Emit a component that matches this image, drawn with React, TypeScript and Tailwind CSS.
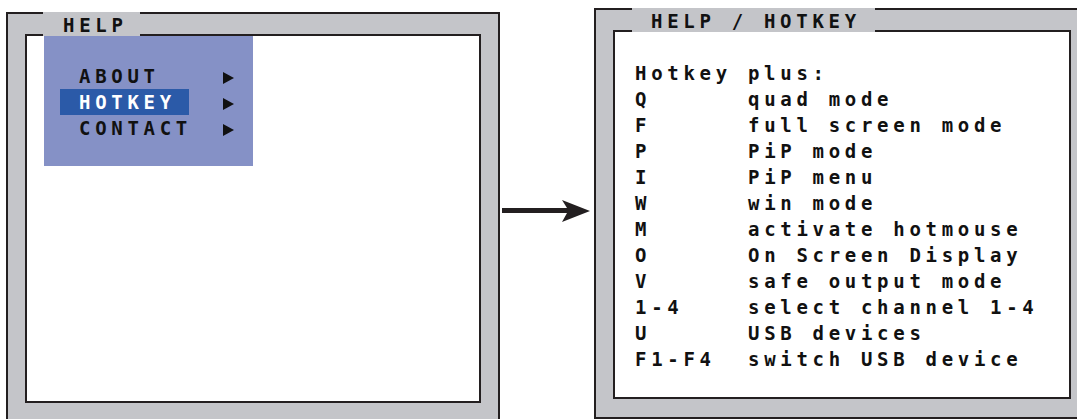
const menu = [
  { label: 'ABOUT', active: false },
  { label: 'HOTKEY', active: true },
  { label: 'CONTACT', active: false },
];

const hotkeys = [
  ['Q', 'quad mode'],
  ['F', 'full screen mode'],
  ['P', 'PiP mode'],
  ['I', 'PiP menu'],
  ['W', 'win mode'],
  ['M', 'activate hotmouse'],
  ['O', 'On Screen Display'],
  ['V', 'safe output mode'],
  ['1-4', 'select channel 1-4'],
  ['U', 'USB devices'],
  ['F1-F4', 'switch USB device'],
];

function Triangle() {
  return (
    <svg className="ml-[34px] mt-[9px] h-[12px] w-[11px] shrink-0" viewBox="0 0 11 12">
      <polygon points="0,0 11,6 0,12" fill="#111" />
    </svg>
  );
}

export default function App() {
  return (
    <div className="flex h-[419px] w-[1077px] items-start overflow-hidden bg-white font-['DejaVu_Sans_Mono',monospace] text-[19px] font-bold tracking-[4.7px] text-[#111]">
      {/* left screen: help menu */}
      <div className="relative ml-[6px] mt-[12px] h-[410px] w-[494px] shrink-0 border-2 border-[#231f20] bg-[#c4c5c9] pl-[17px] pr-[17px] pt-[20px]">
        <div className="absolute left-[35px] top-[-2px] h-[24px] w-[97px] bg-[#c4c5c9] pl-[20px] pt-[1px] leading-[24px]">
          HELP
        </div>
        <div className="h-[369px] border-2 border-[#231f20] bg-white">
          <div className="ml-[17px] h-[130px] w-[209px] bg-[#8591c6] pt-[27px]">
            {menu.map((item) => (
              <div key={item.label} className="flex items-start">
                <div
                  className={
                    item.active
                      ? 'ml-[16px] h-[26px] w-[129px] bg-[#2b5aa8] pl-[19px] leading-[26px] text-white'
                      : 'ml-[16px] h-[26px] w-[129px] pl-[19px] leading-[26px]'
                  }
                >
                  {item.label}
                </div>
                <Triangle />
              </div>
            ))}
          </div>
        </div>
      </div>

      {/* arrow */}
      <svg className="mt-[195px] h-[30px] w-[94px] shrink-0" viewBox="0 0 94 30">
        <polygon points="2,13 67,13 62,5 90,16 62,27 67,18 2,18" fill="#231f20" />
      </svg>

      {/* right screen: hotkey list */}
      <div className="relative mt-[8px] h-[411px] w-[496px] shrink-0 border-2 border-[#231f20] bg-[#c4c5c9] pb-[18px] pl-[17px] pr-[17px] pt-[20px]">
        <div className="absolute left-[36px] top-[-2px] h-[24px] w-[243px] bg-[#c4c5c9] pl-[19px] pt-[1px] leading-[24px] whitespace-pre">
          HELP / HOTKEY
        </div>
        <div className="h-[369px] border-2 border-[#231f20] bg-white pl-[20px] pt-[28px]">
          <div className="h-[26px] leading-[26px]">Hotkey plus:</div>
          {hotkeys.map(([key, desc]) => (
            <div key={key} className="flex h-[26px] leading-[26px]">
              <span className="w-[113px] shrink-0">{key}</span>
              <span className="whitespace-pre">{desc}</span>
            </div>
          ))}
        </div>
      </div>
    </div>
  );
}
